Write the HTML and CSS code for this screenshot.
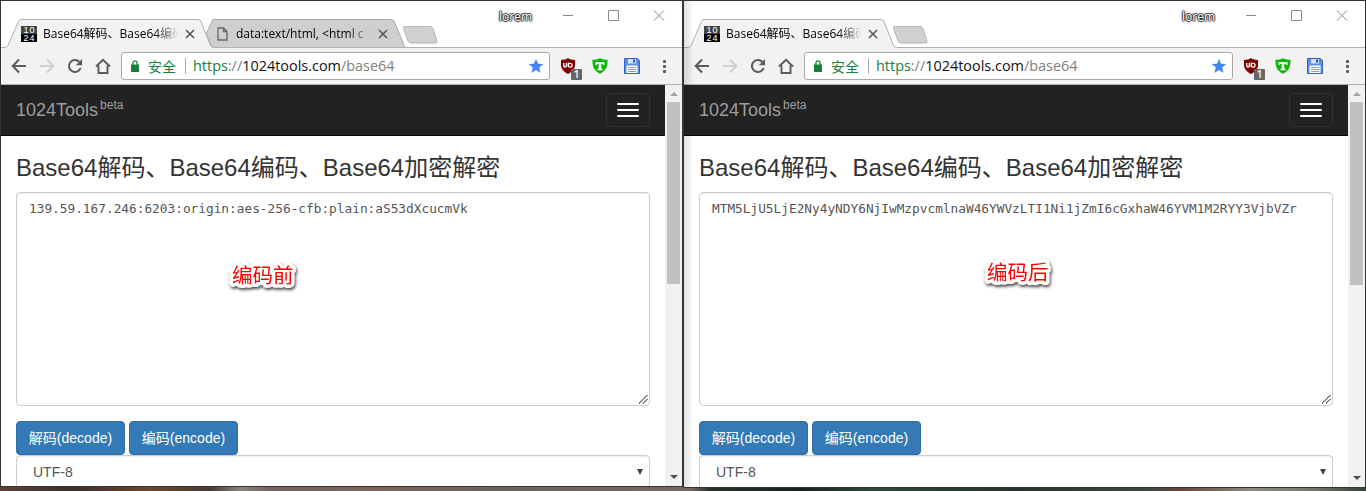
FILE: index.html
```
<!DOCTYPE html>
<html lang="zh-CN">
<head>
<meta charset="utf-8">
<title>Base64解码、Base64编码</title>
<link rel="stylesheet" href="styles.css">
</head>
<body>
<svg class="defs" width="0" height="0">
  <symbol id="i-back" viewBox="0 0 16 16"><path d="M15 8H2.5M8 1.5 1.7 8 8 14.5" fill="none" stroke="currentColor" stroke-width="2"/></symbol>
  <symbol id="i-fwd" viewBox="0 0 16 16"><path d="M1 8h12.500M8 1.500 14.300 8 8 14.500" fill="none" stroke="currentColor" stroke-width="2"/></symbol>
  <symbol id="i-reload" viewBox="0 0 16 16"><path d="M13.600 10A6 6 0 1 1 12.300 3.800" fill="none" stroke="currentColor" stroke-width="2"/><path d="M15 1v6.200H8.800z" fill="currentColor"/></symbol>
  <symbol id="i-home" viewBox="0 0 16 16"><path d="M1 8.500 8 1.700 15 8.500M3.500 7.500V15h9V7.500" fill="none" stroke="currentColor" stroke-width="1.900"/></symbol>
  <symbol id="i-lock" viewBox="0 0 8 12"><path d="M0 4.500h8V12H0z" fill="#188038"/><path d="M1.900 5V3a2.100 2.100 0 0 1 4.200 0v2" fill="none" stroke="#188038" stroke-width="1.300"/></symbol>
  <symbol id="i-star" viewBox="0 0 16 16"><path d="m8 .8 2 5 5.300.3-4.100 3.500 1.400 5.400L8 12.100 3.400 15l1.400-5.400L.7 6.100 6 5.800z" fill="#4285f4"/></symbol>
  <symbol id="i-ublock" viewBox="0 0 16 16"><path d="M8 0c2 1.400 4 1.900 7 2v5c0 4-3 7-7 9-4-2-7-5-7-9V2c3-.1 5-.6 7-2z" fill="#800000"/><path d="M3.700 5v2.700a1.300 1.300 0 0 0 2.600 0V5M8.300 4.500v4.600" fill="none" stroke="#fff" stroke-width="1.300"/><circle cx="10.200" cy="7.200" r="1.900" fill="none" stroke="#fff" stroke-width="1.200"/></symbol>
  <symbol id="i-tshield" viewBox="0 0 16 16"><path d="M.5 1.500C3.500 2 5.500 1.500 8 .3c2.500 1.200 4.500 1.700 7.500 1.200.4 6-1 11-7.500 14.200C1.500 12.500.1 7.500.5 1.500z" fill="#0bb80b"/><path d="M3.500 4h9v3h-1.400V5.800H9.300v4.900h1.200v1.500h-5v-1.500h1.200V5.800H4.900V7H3.500z" fill="#fff"/></symbol>
  <symbol id="i-save" viewBox="0 0 16 16"><path d="M.5.500h13l2 2v13H.5z" fill="#5b8fe6" stroke="#2f62c0"/><path d="M4 1h8v4.500H4z" fill="#d5e4fb"/><path d="M9 1.500h2v3H9z" fill="#2756ae"/><path d="M2.500 7.500h11V15h-11z" fill="#fff"/><path d="M4 9.500h8M4 11.500h8M4 13.500h8" stroke="#999"/></symbol>
  <symbol id="i-page" viewBox="0 0 11 14"><path d="M1 1h5.500L10 4.500V13H1zM6.500 1v3.500H10" fill="none" stroke="#666" stroke-width="1.300"/></symbol>
  <symbol id="i-x" viewBox="0 0 10 10"><path d="m1 1 8 8M9 1 1 9" fill="none" stroke="currentColor" stroke-width="1.700"/></symbol>
  <symbol id="i-grip" viewBox="0 0 9 9"><path d="M0 8.500 8.500 0M4 8.500 8.500 4" stroke="#333" stroke-width="1.100" stroke-dasharray="1.400 .4"/></symbol>
</svg>

<main class="desktop">
  <section class="window window-before">
    <header class="titlebar">
      <svg class="tab-shapes" width="681" height="47" viewBox="1 1 681 47">
        <path d="M213 19.500H391.500Q393 19.500 394 21L405 47.500H212L206 34z" fill="#cfcfcf" stroke="#a9a9a9"/>
        <path d="M404.500 26.500H430Q432 26.500 433 28.500L437 41Q437.500 43 436 43H410.500Q409 43 408 41L403.500 28.500Q403 26.500 404.500 26.500z" fill="#d0d0d0" stroke="#b6b6b6"/>
        <path d="M1 47.500H5Q7 47.500 8 45.500L18.500 21.500Q19.500 19.500 21 19.500H198Q200 19.500 201 21.500L210.500 45.500Q211.500 47.500 213.500 47.500H682V49H1z" fill="#f2f2f2"/>
        <path d="M1 47.500H5Q7 47.500 8 45.500L18.500 21.500Q19.500 19.500 21 19.500H198Q200 19.500 201 21.500L210.500 45.500Q211.500 47.500 213.500 47.500H682" fill="none" stroke="#b0b0b0"/>
        <path d="M7.500 47.500H211.500" stroke="#f2f2f2"/>
      </svg>
      <div class="tabs">
        <div class="tab"><span class="favicon"><b>10</b><b>24</b></span><span class="tab-title">Base64解码、Base64编码</span><svg class="tab-x"><use href="#i-x"/></svg></div>
        <div class="tab tab-back"><svg class="page-icon"><use href="#i-page"/></svg><span class="tab-title">data:text/html, &lt;html c</span><svg class="tab-x"><use href="#i-x"/></svg></div>
      </div>
      <div class="caption"><span class="user">lorem</span>
        <svg width="102" height="11" viewBox="0 0 102 11"><path d="M0 5.500h10M45.500.5h10v10h-10zM91 .5l10 10M101 .5l-10 10" fill="none" stroke="#8a8a8a"/></svg>
      </div>
    </header>
    <div class="toolbar">
      <svg class="nav"><use href="#i-back"/></svg><svg class="nav nav-off"><use href="#i-fwd"/></svg><svg class="nav"><use href="#i-reload"/></svg><svg class="nav"><use href="#i-home"/></svg>
      <div class="omnibox"><svg class="lock"><use href="#i-lock"/></svg><span class="secure">安全</span><span class="divider"></span><span class="url"><i class="scheme">https</i><i class="dim">://</i>1024tools.com<i class="dim">/base64</i></span><svg class="star"><use href="#i-star"/></svg></div>
      <div class="extensions"><span class="ublock"><svg><use href="#i-ublock"/></svg><em class="badge">1</em></span><svg><use href="#i-tshield"/></svg><svg><use href="#i-save"/></svg><span class="dots"><i></i><i></i><i></i></span></div>
    </div>
    <div class="viewport">
      <div class="page">
        <nav class="navbar"><span class="brand">1024Tools<sup>beta</sup></span><span class="burger"><i></i><i></i><i></i></span></nav>
        <div class="content">
          <h3>Base64解码、Base64编码、Base64加密解密</h3>
          <div class="textarea">139.59.167.246:6203:origin:aes-256-cfb:plain:aS53dXcucmVk<svg class="grip"><use href="#i-grip"/></svg><svg class="note note-before" width="90" height="44"><text x="12" y="30">编码前</text></svg></div>
          <div class="buttons"><span class="btn">解码(decode)</span><span class="btn">编码(encode)</span></div>
          <div class="select"><span>UTF-8</span><i></i></div>
        </div>
      </div>
      <div class="scrollbar"><i class="up"></i><span class="thumb"></span><i class="down"></i></div>
    </div>
  </section>

  <section class="window window-after">
    <header class="titlebar">
      <svg class="tab-shapes" width="681" height="47" viewBox="1 1 681 47">
        <path d="M211.500 26.500H237Q239 26.500 240 28.500L244 41Q244.500 43 243 43H217.500Q216 43 215 41L210.500 28.500Q210 26.500 211.500 26.500z" fill="#d0d0d0" stroke="#b6b6b6"/>
        <path d="M1 47.500H5Q7 47.500 8 45.500L18.500 21.500Q19.500 19.500 21 19.500H198Q200 19.500 201 21.500L210.500 45.500Q211.500 47.500 213.500 47.500H682V49H1z" fill="#f2f2f2"/>
        <path d="M1 47.500H5Q7 47.500 8 45.500L18.500 21.500Q19.500 19.500 21 19.500H198Q200 19.500 201 21.500L210.500 45.500Q211.500 47.500 213.500 47.500H682" fill="none" stroke="#b0b0b0"/>
      </svg>
      <div class="tabs">
        <div class="tab"><span class="favicon"><b>10</b><b>24</b></span><span class="tab-title">Base64解码、Base64编码</span><svg class="tab-x"><use href="#i-x"/></svg></div>
      </div>
      <div class="caption"><span class="user">lorem</span>
        <svg width="102" height="11" viewBox="0 0 102 11"><path d="M0 5.500h10M45.500.5h10v10h-10zM91 .5l10 10M101 .5l-10 10" fill="none" stroke="#8a8a8a"/></svg>
      </div>
    </header>
    <div class="toolbar">
      <svg class="nav"><use href="#i-back"/></svg><svg class="nav nav-off"><use href="#i-fwd"/></svg><svg class="nav"><use href="#i-reload"/></svg><svg class="nav"><use href="#i-home"/></svg>
      <div class="omnibox"><svg class="lock"><use href="#i-lock"/></svg><span class="secure">安全</span><span class="divider"></span><span class="url"><i class="scheme">https</i><i class="dim">://</i>1024tools.com<i class="dim">/base64</i></span><svg class="star"><use href="#i-star"/></svg></div>
      <div class="extensions"><span class="ublock"><svg><use href="#i-ublock"/></svg><em class="badge">1</em></span><svg><use href="#i-tshield"/></svg><svg><use href="#i-save"/></svg><span class="dots"><i></i><i></i><i></i></span></div>
    </div>
    <div class="viewport">
      <div class="page">
        <nav class="navbar"><span class="brand">1024Tools<sup>beta</sup></span><span class="burger"><i></i><i></i><i></i></span></nav>
        <div class="content">
          <h3>Base64解码、Base64编码、Base64加密解密</h3>
          <div class="textarea">MTM5LjU5LjE2Ny4yNDY6NjIwMzpvcmlnaW46YWVzLTI1Ni1jZmI6cGxhaW46YVM1M2RYY3VjbVZr<svg class="grip"><use href="#i-grip"/></svg><svg class="note note-after" width="90" height="44"><text x="12" y="30">编码后</text></svg></div>
          <div class="buttons"><span class="btn">解码(decode)</span><span class="btn">编码(encode)</span></div>
          <div class="select"><span>UTF-8</span><i></i></div>
        </div>
      </div>
      <div class="scrollbar"><i class="up"></i><span class="thumb"></span><i class="down"></i></div>
    </div>
  </section>
</main>
</body>
</html>
```
FILE: styles.css
```
* { box-sizing: border-box; }
body { margin: 0; overflow: hidden; font-family: "Liberation Sans", "Noto Sans CJK SC", sans-serif; }
i, em { font-style: normal; }
.defs { position: absolute; }
svg { display: block; flex: none; }

.desktop {
  display: flex; align-items: flex-start; width: 1366px; height: 491px;
  background: linear-gradient(90deg, #5a4234 0, #3c3027 70px, #6b4631 150px, #4a3a30 210px, #8a8580 240px, #75645c 270px, #7b6558 380px, #6b615b 500px, #78695f 690px, #26342c 710px, #17221d 800px, #2b4a3a 870px, #26352d 1020px, #3d4a40 1150px, #6a4438 1180px, #8c8b7c 1250px, #777a6b 1310px, #33423a 1366px);
}
.window { position: relative; display: flex; flex-direction: column; width: 683px; height: 487px; border: 1px solid #343336; background: #fff; overflow: hidden; }
.window-after { height: 488px; }
.window-after::after { content: ""; position: absolute; left: 0; top: 0; bottom: 0; width: 10px; background: linear-gradient(90deg, rgba(0,0,0,.12), rgba(0,0,0,0)); }

.titlebar { position: relative; display: flex; justify-content: space-between; flex: none; height: 47px; }
.tab-shapes { position: absolute; left: 0; top: 0; }
.tabs { position: relative; display: flex; padding: 25px 0 0 20px; }
.tab { display: flex; align-items: flex-start; width: 195px; height: 16px; }
.favicon { display: flex; flex-direction: column; width: 16px; height: 16px; margin-right: 6px; background: linear-gradient(#444 0 50%, #000 50%); color: #fff; text-align: center; }
.favicon b { font: 9px/8px "Liberation Sans", sans-serif; letter-spacing: 1px; padding-left: 1px; }
.tab-title { width: 136px; overflow: hidden; white-space: nowrap; font: 12px/16px "Open Sans", "Noto Sans CJK SC", sans-serif; color: #000; -webkit-mask-image: linear-gradient(90deg, #000 112px, transparent 136px); mask-image: linear-gradient(90deg, #000 112px, transparent 136px); }
.tab-x { width: 10px; height: 10px; margin: 3px 0 0 6px; color: #5a5a5a; }
.page-icon { width: 11px; height: 14px; margin: 1px 8px 0 1px; }
.tab-back .tab-title { width: 136px; }
.caption { position: relative; display: flex; gap: 31px; padding: 9px 17px 0 0; }
.user { margin-top: -1px; font: 12px/16px "Open Sans", sans-serif; color: #fff; text-shadow: 1px 0 1px #222, -1px 0 1px #222, 0 1px 1px #222, 0 -1px 1px #222; }

.toolbar { display: flex; align-items: flex-start; flex: none; height: 37px; padding: 4px 0 0 10px; background: #f2f2f2; border-bottom: 1px solid #b0b0b0; }
.nav { width: 16px; height: 16px; margin: 6px 12px 0 0; color: #5a5a5a; }
.nav-off { color: #cfcfcf; }
.omnibox { display: flex; align-items: center; width: 429px; height: 28px; margin-left: -2px; padding: 0 5px 0 9px; border: 1px solid #a9a9a9; border-radius: 3px; background: #fff; }
.lock { width: 8px; height: 12px; }
.secure { width: 28px; margin-left: 9px; font: 14px/20px "Noto Sans CJK SC", sans-serif; color: #188038; }
.divider { width: 1px; height: 16px; margin: 0 7px 0 9px; background: #aaa; }
.url { flex: 1; font: 14.430px/20px "Open Sans", sans-serif; white-space: nowrap; color: #111; }
.scheme { color: #188038; }
.dim { color: #808080; }
.star { width: 16px; height: 16px; }
.extensions { display: flex; gap: 16px; padding: 6px 0 0 10px; }
.extensions svg { width: 16px; height: 16px; }
.ublock { position: relative; }
.badge { position: absolute; left: 11px; top: 11px; width: 11px; height: 11px; border-radius: 1px; background: #666; color: #fff; font: 600 10px/11px "Open Sans", sans-serif; text-align: center; }
.dots { display: flex; flex-direction: column; gap: 2px; padding: 2px 0 0 7px; }
.dots i { width: 3px; height: 3px; border-radius: 1px; background: #5a5a5a; }

.viewport { display: flex; flex: 1; min-height: 0; }
.page { width: 664px; overflow: hidden; }
.navbar { display: flex; justify-content: space-between; height: 51px; padding: 8px 15px 0; background: #222; border-bottom: 1px solid #080808; }
.brand { padding-top: 7px; font-size: 18px; line-height: 20px; color: #9d9d9d; }
.brand sup { position: relative; top: -7px; margin-left: 2px; font-size: 12px; line-height: 0; vertical-align: baseline; }
.burger { display: flex; flex-direction: column; gap: 4px; width: 44px; height: 34px; padding: 9px 10px; border: 1px solid #333; border-radius: 4px; }
.burger i { height: 2px; background: #fff; border-radius: 1px; }
.content { padding: 0 15px; }
h3 { margin: 0; padding-top: 19px; height: 56px; font-size: 24px; line-height: 26px; font-weight: 400; color: #333; white-space: nowrap; }
.textarea { position: relative; height: 214px; padding: 6px 12px; border: 1px solid #ccc; border-radius: 4px; box-shadow: inset 0 1px 1px rgba(0,0,0,.075); font: 12.790px/20px "DejaVu Sans Mono", monospace; color: #555; white-space: nowrap; }
.grip { position: absolute; right: 1px; bottom: 1px; width: 9px; height: 9px; }
.note { position: absolute; overflow: visible; filter: drop-shadow(1px 2px 1.500px rgba(0,0,0,.7)); }
.note-before { left: 203px; top: 60px; }
.note-after { left: 275px; top: 57px; }
.note text { font: 20.500px "Noto Sans CJK SC", sans-serif; fill: #f00; stroke: #fff; stroke-width: 7px; stroke-linejoin: round; paint-order: stroke; }
.buttons { display: flex; gap: 4px; padding-top: 15px; }
.btn { width: 109px; height: 34px; border: 1px solid #2e6da4; border-radius: 4px; background: #337ab7; color: #fff; font-size: 14px; line-height: 32px; text-align: center; white-space: nowrap; }
.select { display: flex; align-items: center; justify-content: space-between; height: 34px; padding: 0 6px 0 16px; border: 1px solid #ccc; border-radius: 4px; box-shadow: inset 0 1px 1px rgba(0,0,0,.075); color: #555; font-size: 14px; }
.select i { border: 3.500px solid transparent; border-top: 6px solid #444; border-bottom: 0; }
.scrollbar { display: flex; flex-direction: column; align-items: center; width: 17px; background: #f1f1f1; }
.scrollbar .up { margin: 7px 0 6px; border: 4px solid transparent; border-bottom-color: #a3a3a3; border-top: 0; }
.thumb { width: 13px; height: 182px; background: #c1c1c1; }
.window-after .thumb { height: 183px; }
.scrollbar .down { margin: auto 0 7px; border: 4px solid transparent; border-top-color: #505050; border-bottom: 0; }
```
